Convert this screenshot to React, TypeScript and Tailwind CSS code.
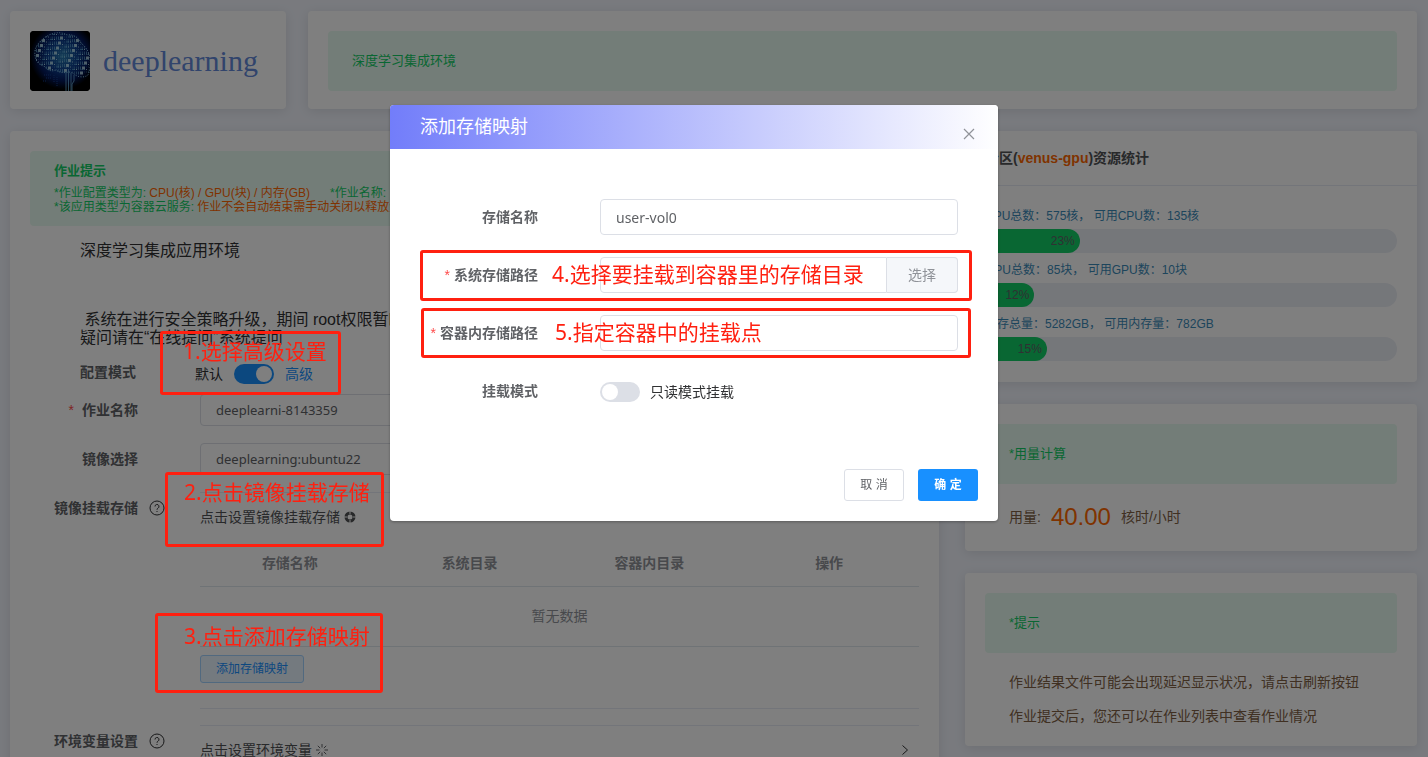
import React, { useState } from 'react';

const resources = [
    { text: 'CPU总数：575核， 可用CPU数：135核', percent: 23 },
    { text: 'GPU总数：85块， 可用GPU数：10块', percent: 12 },
    { text: '内存总量：5282GB， 可用内存量：782GB', percent: 15 },
];

const columns = ['存储名称', '系统目录', '容器内目录', '操作'];

const brainPath = 'M5 20C6 13 13 7 19 4c6-3 13-3 18 0 7-1 12 3 14 8 5 4 8 9 9 15 1 6 0 12-2 17-4 3-9 2-13 0-2-2-4-3-6-3-5 1-9 1-13-2-5 2-9 0-12-4-6-1-10-7-9-15z';

// Short circuit traces filling the brain, on a coarse grid
const traces = Array.from({ length: 460 }, (_, i) => {
    const x = 4 + (i % 28) * 2;
    const y = 3 + Math.floor(i / 28) * 2.5;
    const k = (i * 37 + Math.floor(i / 28) * 11) % 17;
    return { x, y, w: k % 5 === 0 ? 3 : 1, h: k % 3 === 0 ? 3 : 1, o: 0.15 + k / 24, light: k > 13 };
});

const BrainLogo: React.FC = () => (
    <svg viewBox="0 0 60 60" className="h-[60px] w-[60px] shrink-0 rounded" role="img" aria-label="deeplearning">
        <defs>
            <radialGradient id="glow" cx="0.55" cy="0.42" r="0.55">
                <stop offset="0" stopColor="#2a7cae" />
                <stop offset="0.45" stopColor="#0c3c8c" />
                <stop offset="0.75" stopColor="#03185a" />
                <stop offset="1" stopColor="#000000" />
            </radialGradient>
            <clipPath id="brain">
                <path d={brainPath} />
            </clipPath>
        </defs>
        <rect width="60" height="60" fill="#000" />
        <rect width="60" height="60" fill="url(#glow)" />
        <g clipPath="url(#brain)">
            {traces.map((t, i) => (
                <rect key={i} x={t.x} y={t.y} width={t.w} height={t.h} fill={t.light ? '#c8ecf4' : '#6cb4d8'} opacity={t.o} />
            ))}
        </g>
        <path d={brainPath} fill="none" stroke="#8cc8e8" strokeWidth="1" strokeDasharray="1 1.5" />
        <path d="M36 40v20M38.500 38v22M41 42v18M44 44v6l-2 3v7" fill="none" stroke="#6cb0dc" strokeWidth="0.8" />
        <path d="M14 44h7M16 47h5M13 50h4M24 44v8M27 46v9" fill="none" stroke="#16408c" strokeWidth="1" strokeDasharray="1 1" />
    </svg>
);

const Card: React.FC<{ className?: string; children: React.ReactNode }> = ({ className = '', children }) => (
    <section className={`rounded bg-white shadow-[0_2px_12px_0_rgba(0,0,0,0.1)] ${className}`}>{children}</section>
);

const Banner: React.FC<{ children: React.ReactNode }> = ({ children }) => (
    <div className="flex h-[60px] items-center rounded bg-[#e7faf0] px-6 text-[13px] text-[#13ce66]">{children}</div>
);

const HelpIcon: React.FC = () => (
    <svg viewBox="0 0 16 16" className="h-4 w-4" fill="none" stroke="#303133" strokeWidth="1">
        <circle cx="8" cy="8" r="7" />
        <path d="M6 6.500a2 2 0 1 1 3 1.700c-.7.400-1 .8-1 1.500M8 11v1" />
    </svg>
);

const LifeBuoyIcon: React.FC = () => (
    <svg viewBox="0 0 12 12" className="h-3 w-3" fill="none" stroke="#505255">
        <circle cx="6" cy="6" r="4" strokeWidth="3" />
        <path d="M6 0v3M6 9v3M0 6h3M9 6h3" stroke="#fff" strokeWidth="1" />
    </svg>
);

const SpinnerIcon: React.FC = () => (
    <svg viewBox="0 0 12 12" className="h-3 w-3" fill="none" stroke="#606266" strokeWidth="1">
        <path d="M6 0v3.500M6 8.500V12M0 6h3.500M8.500 6H12M1.800 1.800l2.400 2.400M7.800 7.800l2.400 2.400M10.200 1.800L7.800 4.200M4.200 7.800l-2.400 2.400" />
    </svg>
);

const FormLabel: React.FC<{ htmlFor?: string; required?: boolean; children: React.ReactNode }> = ({ htmlFor, required, children }) => (
    <label htmlFor={htmlFor} className="w-[108px] shrink-0 text-right font-bold leading-8 text-[#606266]">
        {required && <span className="mr-2 font-normal text-[#ff4949]">*</span>}
        {children}
    </label>
);

const JobForm: React.FC = () => {
    const [advanced, setAdvanced] = useState(true);
    const [jobName, setJobName] = useState('deeplearni-8143359');
    const [image, setImage] = useState('deeplearning:ubuntu22');

    return (
        <Card className="h-[800px] p-5">
            <div className="h-[75px] overflow-hidden rounded bg-[#e7faf0] px-6 pt-3 text-xs leading-[14px] text-[#13ce66]">
                <h3 className="mb-[7px] text-[13px] font-bold leading-4">作业提示</h3>
                <p className="whitespace-nowrap">
                    *作业配置类型为: <span className="text-[#ff6600]">CPU(核) / GPU(块) / 内存(GB)</span>
                    <span className="ml-5">*作业名称: </span>
                </p>
                <p className="whitespace-nowrap">
                    *该应用类型为容器云服务: <span className="text-[#ff6600]">作业不会自动结束需手动关闭以释放资源</span>
                </p>
            </div>

            <div className="px-[50px] pt-4 text-base leading-[18px] text-[#303133]">
                <p>深度学习集成应用环境</p>
                <p className="mt-[51px] whitespace-pre">{' 系统在进行安全策略升级，期间 root权限暂时关闭，如有\n疑问请在“在线提问”系统提问'}</p>
            </div>

            <div className="mt-[7px] flex h-10 items-center pl-[50px]">
                <span className="w-[115px] pb-1 font-bold text-[#606266]">配置模式</span>
                <span className="text-[#303133]">默认</span>
                <button type="button" role="switch" aria-checked={advanced} aria-label="配置模式" onClick={() => setAdvanced(!advanced)} className="mx-[11px] flex h-5 w-10 items-center justify-end rounded-full bg-[#1890ff] p-[2px]">
                    <span className="h-4 w-4 rounded-full bg-white" />
                </button>
                <span className="text-[#1890ff]">高级</span>
            </div>

            <div className="flex flex-col gap-[17px]">
                <div className="flex h-8">
                    <FormLabel htmlFor="jobName" required>作业名称</FormLabel>
                    <input id="jobName" value={jobName} onChange={(e) => setJobName(e.target.value)} className="ml-[62px] h-8 min-w-0 flex-1 rounded border border-[#dcdfe6] px-[15px] font-['Noto_Sans','Noto_Sans_CJK_SC',sans-serif] text-[13px] text-[#606266] outline-none" />
                </div>
                <div className="flex h-8">
                    <FormLabel htmlFor="image">镜像选择</FormLabel>
                    <input id="image" value={image} onChange={(e) => setImage(e.target.value)} className="ml-[62px] h-8 min-w-0 flex-1 rounded border border-[#dcdfe6] px-[15px] font-['Noto_Sans','Noto_Sans_CJK_SC',sans-serif] text-[13px] text-[#606266] outline-none" />
                </div>

                <div className="flex items-start">
                    <FormLabel>镜像挂载存储</FormLabel>
                    <span className="mt-2 flex w-[62px] pl-[11px]"><HelpIcon /></span>
                    <div className="flex-1 border-y border-[#e6ebf5]">
                        <button type="button" className="flex h-12 w-full items-center gap-1 text-[#505255]">
                            点击设置镜像挂载存储
                            <LifeBuoyIcon />
                        </button>
                        <table className="w-full table-fixed text-center">
                            <thead>
                                <tr className="h-[45px] border-b border-[#dfe6ec] text-[#909399]">
                                    {columns.map((c) => (
                                        <th key={c} className="font-bold">{c}</th>
                                    ))}
                                </tr>
                            </thead>
                            <tbody>
                                <tr className="h-[60px] border-b border-[#dfe6ec] text-[#909399]">
                                    <td colSpan={4}>暂无数据</td>
                                </tr>
                            </tbody>
                        </table>
                        <button type="button" className="mt-2 mb-[25px] block h-7 w-[104px] rounded-[3px] border border-[#a3d3ff] bg-[#e8f4ff] text-xs text-[#1890ff]">
                            添加存储映射
                        </button>
                    </div>
                </div>

                <div className="-mt-px flex items-start">
                    <FormLabel>环境变量设置</FormLabel>
                    <span className="mt-2 flex w-[62px] pl-[11px]"><HelpIcon /></span>
                    <div className="flex-1 border-t border-[#e6ebf5]">
                        <button type="button" className="flex h-12 w-full items-center gap-1 pr-[10px] text-[#505255]">
                            点击设置环境变量
                            <SpinnerIcon />
                            <svg viewBox="0 0 8 12" className="ml-auto h-3 w-2" fill="none" stroke="#303133" strokeWidth="1">
                                <path d="M1.500 1.500L6.500 6l-5 4.500" />
                            </svg>
                        </button>
                    </div>
                </div>
            </div>
        </Card>
    );
};

const SidePanels: React.FC = () => (
    <div className="flex flex-col gap-[22px]">
        <Card className="h-[251px]">
            <h2 className="flex h-[55px] items-center border-b border-[#e6ebf5] px-5 font-bold text-[#505255]">
                分区(<span className="text-[#ff6600]">venus-gpu</span>)资源统计
            </h2>
            <div className="px-5 pt-[19px]">
                {resources.map((r) => (
                    <div key={r.text} className="mb-[6px]">
                        <p className="h-6 whitespace-pre text-xs leading-[22px] text-[#3a8ab8]">{r.text}</p>
                        <div className="h-6 overflow-hidden rounded-full bg-[#ebeef5]">
                            <div className="h-6 rounded-full bg-[#13ce66] pr-[5px] text-right text-xs leading-6 text-[#606266]" style={{ width: `${r.percent}%` }}>
                                {r.percent}%
                            </div>
                        </div>
                    </div>
                ))}
            </div>
        </Card>
        <Card className="h-[147px] p-5">
            <Banner>*用量计算</Banner>
            <p className="mt-[15px] flex items-center pl-6 leading-9 text-[#806044]">
                用量:<span className="mx-[10px] text-2xl leading-9 text-[#ff6600]">40.00</span>核时/小时
            </p>
        </Card>
        <Card className="h-[173px] p-5">
            <Banner>*提示</Banner>
            <div className="mt-3 pl-6 leading-[34px] text-[#806044]">
                <p>作业结果文件可能会出现延迟显示状况，请点击刷新按钮</p>
                <p>作业提交后，您还可以在作业列表中查看作业情况</p>
            </div>
        </Card>
    </div>
);

const MountDialog: React.FC = () => {
    const [name, setName] = useState('user-vol0');
    const [systemPath, setSystemPath] = useState('');
    const [innerPath, setInnerPath] = useState('');
    const [readonly, setReadonly] = useState(false);
    const labelClass = 'w-[128px] shrink-0 text-right font-bold text-[#606266]';
    const inputClass = "h-9 min-w-0 flex-1 border border-[#dcdfe6] px-[15px] font-['Noto_Sans','Noto_Sans_CJK_SC',sans-serif] text-sm text-[#606266] outline-none";

    return (
        <div className="fixed inset-0 flex items-start justify-center bg-black/50 pt-[105px] pr-10">
            <div role="dialog" aria-modal="true" aria-labelledby="dialogTitle" className="w-[608px] rounded-sm bg-white shadow-[0_1px_3px_rgba(0,0,0,0.3)]">
                <div className="flex h-11 items-center justify-between rounded-t-sm bg-linear-to-r/srgb from-[#727dfa] to-white pr-[22px] pl-[30px]">
                    <h2 id="dialogTitle" className="text-lg text-white">添加存储映射</h2>
                    <button type="button" aria-label="关闭" className="mt-[14px]">
                        <svg viewBox="0 0 14 14" className="h-[14px] w-[14px]" fill="none" stroke="#909399" strokeWidth="1.200">
                            <path d="M2 2l10 10M12 2L2 12" />
                        </svg>
                    </button>
                </div>
                <form className="flex flex-col gap-[22px] pt-[50px] pr-10 pl-5" onSubmit={(e) => e.preventDefault()}>
                    <div className="flex h-9 items-center gap-[62px]">
                        <label htmlFor="volName" className={labelClass}>存储名称</label>
                        <input id="volName" value={name} onChange={(e) => setName(e.target.value)} className={`${inputClass} rounded`} />
                    </div>
                    <div className="flex h-9 items-center gap-[62px]">
                        <label htmlFor="systemPath" className={labelClass}>
                            <span className="mr-1 font-normal text-[#ff4949]">*</span>系统存储路径
                        </label>
                        <div className="flex min-w-0 flex-1">
                            <input id="systemPath" value={systemPath} onChange={(e) => setSystemPath(e.target.value)} className={`${inputClass} rounded-l`} />
                            <button type="button" className="h-9 w-[71px] rounded-r border border-l-0 border-[#dcdfe6] bg-[#f5f7fa] text-[#909399]">选择</button>
                        </div>
                    </div>
                    <div className="flex h-9 items-center gap-[62px]">
                        <label htmlFor="innerPath" className={labelClass}>
                            <span className="mr-1 font-normal text-[#ff4949]">*</span>容器内存储路径
                        </label>
                        <input id="innerPath" value={innerPath} onChange={(e) => setInnerPath(e.target.value)} className={`${inputClass} rounded`} />
                    </div>
                    <div className="flex h-9 items-center gap-[62px]">
                        <span className={labelClass}>挂载模式</span>
                        <div className="flex items-center gap-[10px] pt-[2px] text-[#303133]">
                            <button type="button" role="switch" aria-checked={readonly} aria-labelledby="readonlyLabel" onClick={() => setReadonly(!readonly)} className="flex h-5 w-10 items-center rounded-full bg-[#dcdfe6] p-[2px]">
                                <span className="h-4 w-4 rounded-full bg-white" />
                            </button>
                            <span id="readonlyLabel">只读模式挂载</span>
                        </div>
                    </div>
                </form>
                <div className="flex justify-end gap-[14px] px-5 pt-[60px] pb-5 text-xs">
                    <button type="button" className="h-8 w-[60px] rounded-[3px] border border-[#dcdfe6] bg-white text-[#606266]">取 消</button>
                    <button type="button" className="h-8 w-[60px] rounded-[3px] bg-[#1890ff] font-bold text-white">确 定</button>
                </div>
            </div>
        </div>
    );
};

// Numbered red call-outs lying over the page
const Annotations: React.FC = () => (
    <div className="pointer-events-none absolute inset-0 font-['Noto_Sans','Noto_Sans_CJK_SC',sans-serif] text-[21px] leading-6 whitespace-nowrap text-[#ff2010]">
        <div className="absolute top-[331px] left-[160px] h-[64px] w-[181px] rounded-[3px] border-3 border-[#ff2010] pt-[5px] pl-5">1.选择高级设置</div>
        <div className="absolute top-[472px] left-[165px] h-[75px] w-[219px] rounded-[3px] border-3 border-[#ff2010] pt-[5px] pl-4">2.点击镜像挂载存储</div>
        <div className="absolute top-[613px] left-[155px] h-[80px] w-[228px] rounded-[3px] border-3 border-[#ff2010] pt-2 pl-[26px]">3.点击添加存储映射</div>
        <div className="absolute top-[250px] left-[420px] h-[51px] w-[552px] rounded-[3px] border-3 border-[#ff2010] pt-[9px] pl-[129px]">4.选择要挂载到容器里的存储目录</div>
        <div className="absolute top-[308px] left-[421px] h-[50px] w-[550px] rounded-[3px] border-3 border-[#ff2010] pt-[9px] pl-[131px]">5.指定容器中的挂载点</div>
    </div>
);

const App: React.FC = () => {
    return (
        <div className="relative h-screen overflow-hidden bg-[#f2f5fd] pt-[11px] pr-[11px] pl-[10px] font-['Liberation_Sans','Noto_Sans_CJK_SC',sans-serif] text-sm leading-5">
            <header className="flex gap-[22px]">
                <Card className="flex h-[98px] w-[276px] items-start gap-[13px] p-5">
                    <BrainLogo />
                    <h1 className="font-['Liberation_Serif',serif] text-[30px] leading-[60px] text-[#6288d8]">deeplearning</h1>
                </Card>
                <Card className="h-[98px] flex-1 p-5">
                    <Banner>深度学习集成环境</Banner>
                </Card>
            </header>
            <main className="mt-[22px] grid grid-cols-[929fr_452fr] items-start gap-[26px]">
                <JobForm />
                <SidePanels />
            </main>
            <MountDialog />
            <Annotations />
        </div>
    );
};

export default App;
